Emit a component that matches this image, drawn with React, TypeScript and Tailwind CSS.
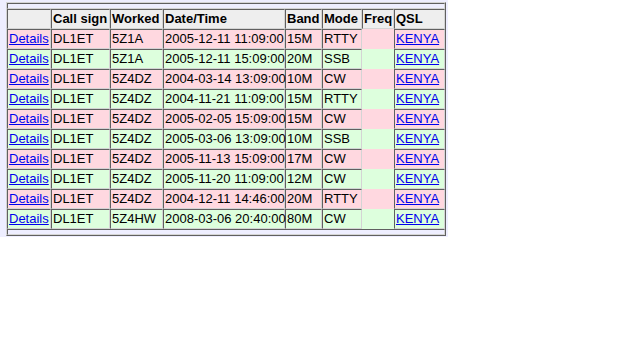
const rows = [
  ['5Z1A', '2005-12-11 11:09:00', '15M', 'RTTY'],
  ['5Z1A', '2005-12-11 15:09:00', '20M', 'SSB'],
  ['5Z4DZ', '2004-03-14 13:09:00', '10M', 'CW'],
  ['5Z4DZ', '2004-11-21 11:09:00', '15M', 'RTTY'],
  ['5Z4DZ', '2005-02-05 15:09:00', '15M', 'CW'],
  ['5Z4DZ', '2005-03-06 13:09:00', '10M', 'SSB'],
  ['5Z4DZ', '2005-11-13 15:09:00', '17M', 'CW'],
  ['5Z4DZ', '2005-11-20 11:09:00', '12M', 'CW'],
  ['5Z4DZ', '2004-12-11 14:46:00', '20M', 'RTTY'],
  ['5Z4HW', '2008-03-06 20:40:00', '80M', 'CW'],
];

const cell = 'border-t border-l border-t-[#606060] border-l-[#606060] border-r border-b border-r-[#d4d4d4] border-b-[#d4d4d4] px-[1px] py-[1px] leading-[16px] whitespace-nowrap text-left align-middle';

export default function App() {
  return (
    <div className="bg-white min-h-[360px]" style={{ fontFamily: '"Liberation Sans", Arial, sans-serif' }}>
      <div className="bg-[#eeeeff] w-[448px] h-[237px] pt-[2px] pl-[6px]">
        <table className="table-fixed border-separate border-spacing-0 w-[440px] text-[13px] text-black border border-t-[#d4d4d4] border-l-[#d4d4d4] border-r-[#606060] border-b-[#606060]">
          <colgroup>
            <col className="w-[44px]" />
            <col className="w-[59px]" />
            <col className="w-[53px]" />
            <col className="w-[122px]" />
            <col className="w-[37px]" />
            <col className="w-[40px]" />
            <col className="w-[32px]" />
            <col className="w-[51px]" />
          </colgroup>
          <tbody>
            <tr>
              <td colSpan={8} className="h-[6px] border-t border-l border-t-[#606060] border-l-[#606060] border-r border-b border-r-[#d4d4d4] border-b-[#d4d4d4] p-0" />
            </tr>
            <tr className="bg-[#eeeeee] font-bold">
              <th className={cell}>&nbsp;</th>
              <th className={cell}>Call sign</th>
              <th className={cell}>Worked</th>
              <th className={cell}>Date/Time</th>
              <th className={cell}>Band</th>
              <th className={cell}>Mode</th>
              <th className={cell}>Freq</th>
              <th className={cell}>QSL</th>
            </tr>
            {rows.map((r, i) => (
              <tr key={i} className={i % 2 === 0 ? 'bg-[#ffd8e0]' : 'bg-[#ddffdd]'}>
                <td className={cell}>
                  <a href="#" className="text-[#0000ee] underline">Details</a>
                </td>
                <td className={cell}>DL1ET</td>
                <td className={cell}>{r[0]}</td>
                <td className={cell}>{r[1]}</td>
                <td className={cell}>{r[2]}</td>
                <td className={cell}>{r[3]}</td>
                <td className="p-[1px]" />
                <td className={cell}>
                  <a href="#" className="text-[#0000ee] underline">KENYA</a>
                </td>
              </tr>
            ))}
            <tr>
              <td colSpan={8} className="h-[6px] border-t border-l border-t-[#606060] border-l-[#606060] border-r border-b border-r-[#d4d4d4] border-b-[#d4d4d4] p-0" />
            </tr>
          </tbody>
        </table>
      </div>
    </div>
  );
}
